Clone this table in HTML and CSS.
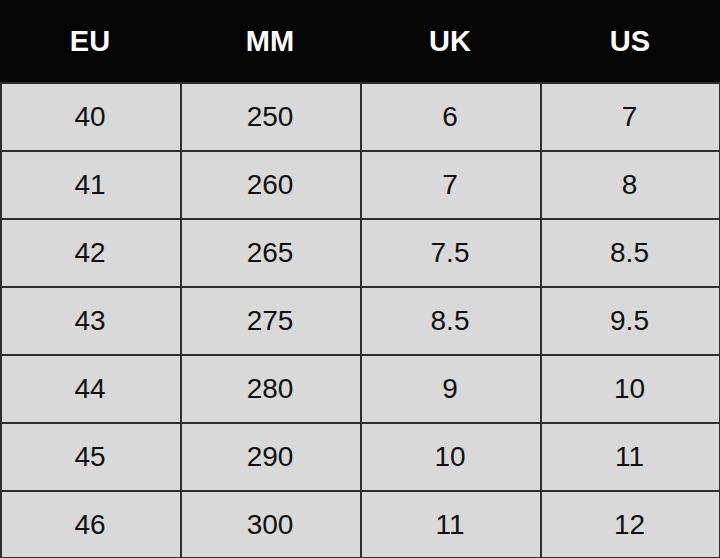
FILE: index.html
```html
<!DOCTYPE html>
<html>
<head>
<meta charset="utf-8">
<link rel="stylesheet" href="styles.css">
</head>
<body>
<div class="size-table">
  <div class="cell head">EU</div>
  <div class="cell head">MM</div>
  <div class="cell head">UK</div>
  <div class="cell head">US</div>

  <div class="cell">40</div><div class="cell">250</div><div class="cell">6</div><div class="cell last">7</div>
  <div class="cell">41</div><div class="cell">260</div><div class="cell">7</div><div class="cell last">8</div>
  <div class="cell">42</div><div class="cell">265</div><div class="cell">7.5</div><div class="cell last">8.5</div>
  <div class="cell">43</div><div class="cell">275</div><div class="cell">8.5</div><div class="cell last">9.5</div>
  <div class="cell">44</div><div class="cell">280</div><div class="cell">9</div><div class="cell last">10</div>
  <div class="cell">45</div><div class="cell">290</div><div class="cell">10</div><div class="cell last">11</div>
  <div class="cell bottom">46</div><div class="cell bottom">300</div><div class="cell bottom">11</div><div class="cell bottom last">12</div>
</div>
</body>
</html>
```
FILE: styles.css
```css
html, body {
  margin: 0;
  padding: 0;
  background: #d9d9d9;
}
.size-table {
  width: 720px;
  height: 558px;
  display: grid;
  grid-template-columns: repeat(4, 180px);
  grid-template-rows: 82px repeat(7, 68px);
  font-family: "Liberation Sans", Arial, sans-serif;
}
.cell {
  box-sizing: border-box;
  display: flex;
  align-items: center;
  justify-content: center;
  padding-right: 2px;
  background: #d9d9d9;
  color: #111;
  font-size: 28px;
  border-left: 2px solid #2e2e2e;
  border-top: 2px solid #2e2e2e;
}
.cell.last {
  border-right: 1px solid #2e2e2e;
}
.cell.bottom {
  border-bottom: 1px solid #2e2e2e;
}
.cell.head {
  background: #050505;
  color: #fff;
  font-weight: bold;
  font-size: 29px;
  padding-right: 0;
  border: none;
}
```
